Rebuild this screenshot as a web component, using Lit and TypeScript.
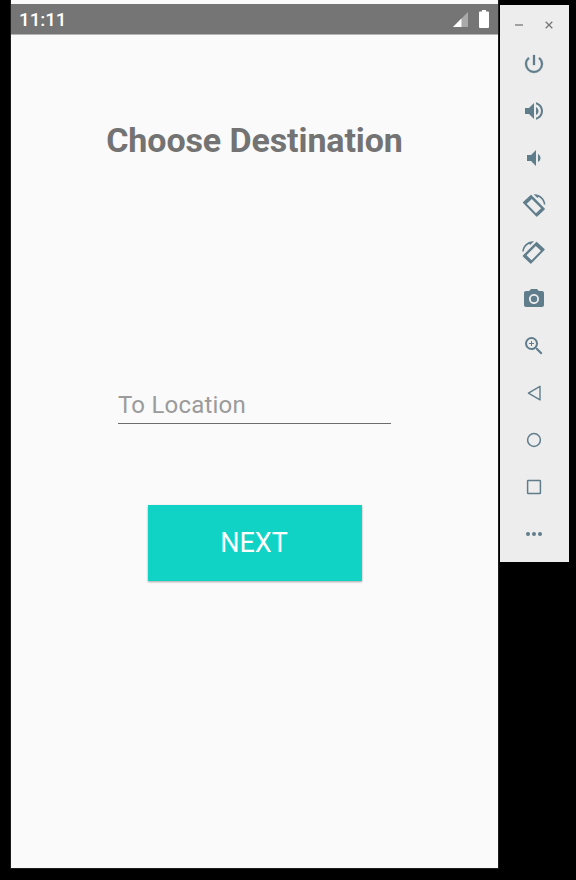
import { LitElement, html, css, svg } from "lit";
import { customElement } from "lit/decorators.js";

const rotateShape = svg`
  <path fill-rule="evenodd" d="M8.7 1.9Q9 1.6 9.4 2L22.7 15.6Q23.1 16 22.7 16.5L15.3 23.6Q14.8 24 14.3 23.5L1.1 10Q.7 9.5 1.1 9.1ZM9.8 5.9L4.7 10.7L14 20.2L19.1 15.2Z"/>
  <path d="M11.6 1.2C17.8.7 23 5.1 23.4 11.6H21.9C21.6 8.2 19.5 5.2 16.4 3.7L15.5 4.9Z"/>`;

const icons = [
  svg`<path d="M13 3h-2v10h2V3zm4.83 2.17-1.42 1.42A6.92 6.92 0 0 1 19 12c0 3.87-3.13 7-7 7A6.995 6.995 0 0 1 7.58 6.58L6.17 5.17A8.932 8.932 0 0 0 3 12a9 9 0 0 0 18 0c0-2.74-1.23-5.18-3.17-6.83z" stroke="#607d8b" stroke-width=".3"/>`,
  svg`<path d="M3 9v6h4l5 5V4L7 9H3zm13.5 3c0-1.77-1.02-3.29-2.5-4.03v8.05c1.48-.73 2.5-2.25 2.5-4.02zM14 3.23v2.06c2.89.86 5 3.54 5 6.71s-2.11 5.85-5 6.71v2.06c4.01-.91 7-4.49 7-8.77s-2.99-7.86-7-8.77z"/>`,
  svg`<path d="M18.5 12c0-1.77-1.02-3.29-2.5-4.03v8.05c1.48-.73 2.5-2.25 2.5-4.02zM5 9v6h4l5 5V4L9 9H5z"/>`,
  rotateShape,
  svg`<g transform="translate(23.6 0) scale(-1 1)">${rotateShape}</g>`,
  svg`<circle cx="12" cy="12" r="3.2"/><path d="M9 2 7.17 4H4c-1.1 0-2 .9-2 2v12c0 1.1.9 2 2 2h16c1.1 0 2-.9 2-2V6c0-1.1-.9-2-2-2h-3.17L15 2H9zm3 15c-2.76 0-5-2.24-5-5s2.24-5 5-5 5 2.24 5 5-2.24 5-5 5z"/>`,
  svg`<path d="M15.5 14h-.79l-.28-.27A6.471 6.471 0 0 0 16 9.5 6.5 6.5 0 1 0 9.5 16c1.61 0 3.09-.59 4.23-1.57l.27.28v.79l5 4.99L20.49 19l-4.99-5zm-6 0C7.01 14 5 11.99 5 9.5S7.01 5 9.5 5 14 7.01 14 9.5 11.99 14 9.5 14zM12 10h-2v2H9v-2H7V9h2V7h1v2h2v1z"/>`,
  svg`<path fill="none" stroke="#607d8b" stroke-width="1.4" stroke-linejoin="round" d="M18 5.3V18.9L6.4 12.1Z"/>`,
  svg`<circle cx="12" cy="12" r="6.4" fill="none" stroke="#607d8b" stroke-width="1.5"/>`,
  svg`<rect x="5.6" y="5.6" width="12.8" height="12.8" rx=".5" fill="none" stroke="#607d8b" stroke-width="1.5"/>`,
  svg`<circle cx="6" cy="12" r="2"/><circle cx="12" cy="12" r="2"/><circle cx="18" cy="12" r="2"/>`,
];

@customElement("phone-screen")
class PhoneScreen extends LitElement {
  static styles = css`
    :host {
      display: block;
      width: 487px;
      height: 868px;
      background: #fafafa;
      box-shadow: 0 0 0 1px #1c1c1c;
      font-family: Roboto, sans-serif;
    }
    .wrap { display: flow-root; }
    .status {
      display: flex;
      align-items: center;
      box-sizing: border-box;
      height: 31px;
      margin-top: 4px;
      padding: 0 9px 0 8px;
      background: #757575;
      border-bottom: 1px solid #b4b4b4;
      color: #fff;
    }
    .time { flex: 1; padding-top: 1px; font-size: 19px; font-weight: 500; line-height: 29px; letter-spacing: -0.15px; }
    .signal { width: 15px; height: 15px; margin-right: 11px; }
    .battery { width: 10px; height: 18px; margin-top: -1px; }
    .content { display: flex; flex-direction: column; align-items: center; }
    h1 {
      margin: 85px 0 0;
      font-size: 34px;
      line-height: 40px;
      letter-spacing: -0.1px;
      font-weight: 700;
      color: #737373;
      white-space: nowrap;
    }
    .field {
      box-sizing: border-box;
      width: 273px;
      margin-top: 230px;
      height: 34px;
      border-bottom: 1px solid #6c6c6c;
      font-size: 24px;
      line-height: 30px;
      letter-spacing: 0.2px;
      color: #9b9b9b;
    }
    button {
      width: 214px;
      height: 76px;
      margin-top: 81px;
      padding: 0 1px 0 0;
      border: 0;
      background: #11d3c5;
      box-shadow: 0 1px 2px rgba(0, 0, 0, 0.35);
      color: #fff;
      font: 400 27px/76px Roboto, sans-serif;
    }
  `;
  render() {
    return html`<div class="wrap">
      <div class="status">
        <span class="time">11:11</span>
        <svg class="signal" viewBox="0 0 16 16"><path d="M16 0V16H0Z" fill="#a9a9a9"/><path d="M9 7V16H0Z" fill="#fff"/></svg>
        <svg class="battery" viewBox="0 0 10 18"><path d="M3 0H7V1.5H9Q10 1.5 10 2.5V17Q10 18 9 18H1Q0 18 0 17V2.5Q0 1.5 1 1.5H3Z" fill="#fff"/></svg>
      </div>
      <div class="content">
        <h1>Choose Destination</h1>
        <div class="field">To Location</div>
        <button>NEXT</button>
      </div>
    </div>`;
  }
}

@customElement("emulator-toolbar")
class EmulatorToolbar extends LitElement {
  static styles = css`
    :host {
      display: block;
      box-sizing: border-box;
      width: 69px;
      height: 557px;
      margin: 5px 0 0 2px;
      background: #ededed;
    }
    .window { display: flex; gap: 20px; height: 35px; padding: 15px 0 0 14px; box-sizing: border-box; }
    .window svg { width: 10px; height: 10px; fill: none; stroke: #777; stroke-width: 1.3; }
    .tools { display: flex; flex-direction: column; align-items: center; gap: 23px; padding: 12px 1px 0 0; }
    .tools svg { width: 24px; height: 24px; fill: #607d8b; }
  `;
  render() {
    return html`
      <div class="window">
        <svg viewBox="0 0 10 10"><path d="M1 5H9"/></svg>
        <svg viewBox="0 0 10 10"><path d="M1.7 1.7L8.3 8.3M8.3 1.7L1.7 8.3"/></svg>
      </div>
      <div class="tools">${icons.map((i) => html`<svg viewBox="0 0 24 24">${i}</svg>`)}</div>
    `;
  }
}

@customElement("app-root")
class AppRoot extends LitElement {
  static styles = css`
    :host {
      display: flex;
      align-items: flex-start;
      box-sizing: border-box;
      width: 576px;
      height: 880px;
      padding-left: 11px;
      background: #000;
      overflow: hidden;
    }
  `;
  render() {
    return html`<phone-screen></phone-screen><emulator-toolbar></emulator-toolbar>`;
  }
}
